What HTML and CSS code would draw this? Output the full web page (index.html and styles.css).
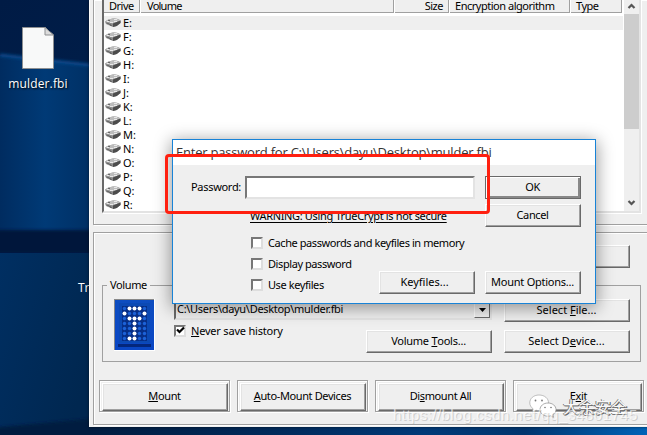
FILE: index.html
```html
<!DOCTYPE html>
<html lang="en">
<head>
<meta charset="utf-8">
<title>TrueCrypt</title>
<link rel="stylesheet" href="styles.css">
</head>
<body>
<svg width="0" height="0" class="defs" aria-hidden="true">
  <defs>
    <symbol id="drive" viewBox="0 0 16 10">
      <path d="M0 3.500Q3 1 8 .5T15.500 2.500V5Q13 8 8 9L1 6z" fill="#8a8a8a"/>
      <path d="M0 3.500Q3 1 8 .5T15.500 2.500L8 5.500z" fill="#bcbcbc"/>
      <path d="M8 5.500 15.500 2.500V5Q13 8 8 9z" fill="#4c4c4c"/>
      <path d="M2 3.500h2M5 4.500h3M9 1.500h3M9 3.500h3" stroke="#e8e8e8" stroke-width="1"/>
      <path d="M3 2.500h2M2 5.500h2M4 6.500h2M5 7.500h2" stroke="#6a6a6a" stroke-width="1"/>
    </symbol>
  </defs>
</svg>
<main class="desktop">
  <svg class="wallpaper" viewBox="0 0 647 435" aria-hidden="true">
    <defs>
      <linearGradient id="sky" x1="0" y1="0" x2="1" y2="1"><stop offset="0" stop-color="#001b45"/><stop offset="1" stop-color="#002a5b"/></linearGradient>
      <linearGradient id="beam" x1="0" y1="0" x2="1" y2="0"><stop offset="0" stop-color="#002c60"/><stop offset=".5" stop-color="#003a76"/><stop offset="1" stop-color="#003065"/></linearGradient>
      <linearGradient id="low" x1="0" y1="0" x2="1" y2=".6"><stop offset="0" stop-color="#002f62"/><stop offset="1" stop-color="#002750"/></linearGradient>
      <linearGradient id="floor" x1="0" y1="0" x2="1" y2="0"><stop offset="0" stop-color="#001c40"/><stop offset=".35" stop-color="#002b5c"/><stop offset=".6" stop-color="#003a78"/><stop offset=".78" stop-color="#00356e"/><stop offset="1" stop-color="#0063b8"/></linearGradient>
      <filter id="soft" x="-20%" y="-50%" width="140%" height="200%"><feGaussianBlur stdDeviation="1.5"/></filter>
    </defs>
    <path d="M0 0h647v435H0z" fill="url(#sky)"/>
    <path d="M0 55 90 65v170H0z" fill="url(#beam)"/>
    <path d="M0 55 90 65" stroke="#0a4a8c" stroke-width="3" filter="url(#soft)"/>
    <path d="M-10 230h110v23H-10z" fill="#00183a" filter="url(#soft)"/>
    <path d="M0 253h90v182H0z" fill="url(#low)"/>
    <path d="M-10 428 100 418v26H-10z" fill="#001c40" filter="url(#soft)"/>
    <path d="M90 426h557v9H90z" fill="url(#floor)"/>
  </svg>
  <figure class="shortcut">
    <svg width="34" height="44" viewBox="0 0 34 44"><path d="M1.500 1.500H24L32.500 9V42.500H1.500z" fill="#f8f9f9" stroke="#8d8f91"/><path d="M24 1.500V9h8.500z" fill="#dcdcdc" stroke="#8d8f91"/></svg>
    <figcaption>mulder.fbi</figcaption>
  </figure>
  <span class="behind">TrueCrypt</span>

  <section class="window">
    <div class="panel top">
      <div class="list">
        <div class="listmain">
          <div class="head"><span>Drive</span><span>Volume</span><span class="r">Size</span><span>Encryption algorithm</span><span>Type</span></div>
          <ul>
            <li class="sel"><svg><use href="#drive"/></svg>E:</li>
            <li><svg><use href="#drive"/></svg>F:</li>
            <li><svg><use href="#drive"/></svg>G:</li>
            <li><svg><use href="#drive"/></svg>H:</li>
            <li><svg><use href="#drive"/></svg>I:</li>
            <li><svg><use href="#drive"/></svg>J:</li>
            <li><svg><use href="#drive"/></svg>K:</li>
            <li><svg><use href="#drive"/></svg>L:</li>
            <li><svg><use href="#drive"/></svg>M:</li>
            <li><svg><use href="#drive"/></svg>N:</li>
            <li><svg><use href="#drive"/></svg>O:</li>
            <li><svg><use href="#drive"/></svg>P:</li>
            <li><svg><use href="#drive"/></svg>Q:</li>
            <li><svg><use href="#drive"/></svg>R:</li>
          </ul>
        </div>
        <div class="scroll">
          <svg width="15" height="14" viewBox="0 0 15 14"><path d="M4.500 8 7.500 5 10.500 8" fill="none" stroke="#555" stroke-width="2.200"/></svg>
          <i></i>
          <svg width="15" height="16" viewBox="0 0 15 16"><path d="M4.500 6 7.500 9 10.500 6" fill="none" stroke="#555" stroke-width="2.200"/></svg>
        </div>
      </div>
    </div>
    <div class="panel bottom">
      <button class="btn upper"></button>
      <fieldset>
        <legend>Volume</legend>
        <svg class="logo" width="41" height="52" viewBox="0 0 41 52">
          <defs>
            <linearGradient id="blue" x1="0" y1="0" x2="0" y2="1"><stop offset="0" stop-color="#0d4dc0"/><stop offset="1" stop-color="#0a46c4"/></linearGradient>
            <pattern id="dots" x="8" y="7" width="5" height="5" patternUnits="userSpaceOnUse"><rect width="5" height="5" fill="#062f88"/><circle cx="2.500" cy="2.500" r="1.700" fill="#1c62d8"/></pattern>
          </defs>
          <path d="M0 0h41v52H0z" fill="#fff"/><path d="M0 0h40v51H0z" fill="#888"/>
          <path d="M1 1h39v50H1z" fill="url(#blue)"/>
          <path d="M5 4h31v40H5z" fill="#0b49b4"/><path d="M4 45h33v3H4z" fill="#04277c"/>
          <path d="M8 7h25v35H8z" fill="url(#dots)"/>
          <g fill="#fff"><circle cx="15.500" cy="9.500" r="2"/><circle cx="20.500" cy="9.500" r="2"/><circle cx="25.500" cy="9.500" r="2"/><circle cx="10.500" cy="14.500" r="2"/><circle cx="30.500" cy="14.500" r="2"/><circle cx="15.500" cy="19.500" r="2"/><circle cx="20.500" cy="19.500" r="2"/><circle cx="25.500" cy="19.500" r="2"/><circle cx="20.500" cy="24.500" r="2"/><circle cx="20.500" cy="29.500" r="2"/><circle cx="20.500" cy="34.500" r="2"/><circle cx="15.500" cy="39.500" r="2"/><circle cx="20.500" cy="39.500" r="2"/></g>
        </svg>
        <div class="middle">
          <div class="combo"><span>C:\Users\dayu\Desktop\mulder.fbi</span><b><svg width="7" height="4" viewBox="0 0 7 4"><path d="M0 0h7L3.500 4z"/></svg></b></div>
          <div class="under">
            <label class="check"><i><svg width="9" height="9" viewBox="0 0 9 9"><path d="M1 3.500 3.500 6 8 1.500" fill="none" stroke="#000" stroke-width="2.200"/></svg></i><span><u>N</u>ever save history</span></label>
            <button class="btn more">Volume <u>T</u>ools...</button>
          </div>
        </div>
        <div class="side"><button class="btn wide">Select <u>F</u>ile...</button><button class="btn wide">Select D<u>e</u>vice...</button></div>
      </fieldset>
      <div class="actions">
        <div><button class="btn"><u>M</u>ount</button></div>
        <div><button class="btn"><u>A</u>uto-Mount Devices</button></div>
        <div><button class="btn">Di<u>s</u>mount All</button></div>
        <div><button class="btn">E<u>x</u>it</button></div>
      </div>
    </div>
  </section>

  <section class="dialog">
    <header>Enter password for C:\Users\dayu\Desktop\mulder.fbi</header>
    <div class="form">
      <div class="row one"><span class="pw">Password:</span><input type="text" aria-label="Password"><button class="btn ok">OK</button></div>
      <div class="row two"><span class="warn">WARNING: Using TrueCrypt is not secure</span><button class="btn">Cancel</button></div>
      <div class="row three">
        <div class="checks">
          <label class="check"><i></i><span>Cache passwords and keyfiles in memory</span></label>
          <label class="check"><i></i><span>Display password</span></label>
          <label class="check"><i></i><span>Use keyfiles</span></label>
        </div>
        <button class="btn key">Keyfiles...</button><button class="btn more">Mount Options...</button>
      </div>
    </div>
  </section>
  <div class="marker"></div>
  <div class="credit">
    <svg width="29" height="24" viewBox="0 0 29 24"><path d="M10 1C4.500 1 .8 4.500.8 8.800c0 2.500 1.300 4.600 3.300 6L3.500 18l3.500-1.800c1 .3 2 .4 3 .4 5.500 0 9.500-3.400 9.500-7.800S15.500 1 10 1z" fill="#fff" stroke="#999" stroke-width=".6"/><path d="M19 9c-4.500 0-8 2.900-8 6.600s3.500 6.600 8 6.600c.9 0 1.800-.1 2.600-.4l2.900 1.500-.6-2.600c1.900-1.200 3.100-3 3.100-5.100C27 11.900 23.500 9 19 9z" fill="#fff" stroke="#888" stroke-width=".7"/><g fill="#777"><circle cx="6.500" cy="6.500" r=".9"/><circle cx="13" cy="6.500" r=".9"/><circle cx="16" cy="13.500" r=".8"/><circle cx="22" cy="13.500" r=".8"/></g></svg>
    <span>大余安全</span>
  </div>
  <div class="url">https://blog.csdn.net/qq_34801745</div>
</main>
</body>
</html>
```
FILE: styles.css
```css
* { box-sizing: border-box; }
body { margin: 0; width: 647px; height: 435px; overflow: hidden; font: 11px/14px "Noto Sans", sans-serif; letter-spacing: -.38px; color: #000; }
.defs { position: absolute; }
.desktop { position: relative; width: 647px; height: 435px; overflow: hidden; }
.wallpaper { display: block; width: 647px; height: 435px; }
.shortcut { position: absolute; left: 0; top: 26px; width: 76px; margin: 0; display: flex; flex-direction: column; align-items: center; }
.shortcut figcaption { margin-top: 5px; font: 12px/18px "Open Sans", sans-serif; letter-spacing: .15px; color: #fff; text-shadow: 1px 1px 2px #000; }
.behind { position: absolute; left: 78px; top: 280px; color: #fff; font: 12px/16px "Open Sans", sans-serif; letter-spacing: 0; }
.window { position: absolute; left: 89px; top: 0; width: 566px; height: 427px; padding: 0 4px 2px; background: #efefef; border-left: 1px solid #fafafa; display: flex; flex-direction: column; box-shadow: 0 0 3px #0008; }
.panel { border: 1px solid #a0a0a0; box-shadow: inset 1px 1px #fff, 1px 1px #fff; margin-left: -1px; }
.top { height: 225px; border-top: 0; padding-left: 8px; }
.list { width: 539px; height: 213px; border: 2px solid; border-color: #a0a0a0 #e3e3e3 #e3e3e3 #696969; border-top: 0; background: #fff; display: flex; justify-content: space-between; box-shadow: 1px 1px #fff; }
.listmain { width: 519px; }
.head { display: grid; grid-template-columns: 37px 254px 55px 121px 52px; height: 13px; line-height: 12px; letter-spacing: -.48px; }
.head span { background: #efefef; border: solid #a0a0a0; border-width: 0 1px 1px 0; margin-right: 1px; padding-left: 5px; }
.head span:nth-child(2) { padding-left: 6px; letter-spacing: -.75px; }
.head .r { text-align: right; padding-right: 5px; }
ul { list-style: none; margin: 3px 0 0; padding: 0; }
li { height: 14px; padding-left: 1px; display: flex; align-items: center; letter-spacing: 0; }
li svg { width: 16px; height: 10px; margin-right: 2px; }
.sel { background: #efefef; }
.scroll { width: 15px; background: #efefef; display: flex; flex-direction: column; }
.scroll i { height: 115px; background: #cdcdcd; }
.scroll svg:last-child { margin-top: auto; }
.bottom { margin-top: 7px; height: 193px; padding: 12px 0 0 5px; }
.btn { display: flex; align-items: center; justify-content: center; font: inherit; letter-spacing: inherit; color: #000; border: 1px solid; border-color: #fff #696969 #696969 #fff; box-shadow: inset -1px -1px #a0a0a0, inset 1px 1px #e3e3e3; background: #efefef; width: 126px; height: 23px; padding: 0 1px 1px 0; border-radius: 0; white-space: pre; }
.btn u { text-underline-offset: 1px; }
.more { letter-spacing: -.25px; }
.wide { letter-spacing: 0; }
.upper { margin-left: 405px; margin-bottom: 10px; }
fieldset { width: 539px; height: 84px; border: 1px solid #a0a0a0; margin: 0 0 0 3px; padding: 7px 0 0 11px; display: flex; }
legend { padding: 0 3px; margin-left: -7px; height: 14px; }
.logo { flex: none; margin-right: 19px; }
.middle { width: 318px; margin-right: 12px; }
.combo { height: 20px; margin-top: 1px; border: 2px solid; border-color: #a0a0a0 #e3e3e3 #e3e3e3 #696969; display: flex; justify-content: space-between; padding-left: 1px; letter-spacing: -.3px; }
.combo b { width: 16px; display: flex; align-items: center; justify-content: center; border: 1px solid; border-color: #fff #696969 #696969 #fff; }
.under { display: flex; justify-content: space-between; align-items: flex-start; }
.check { display: flex; align-items: center; height: 21px; }
.check i { flex: none; width: 12px; height: 12px; background: #fff; border: 2px solid; border-color: #777 #ddd #ddd #777; margin-right: 5px; display: flex; align-items: center; justify-content: center; }
.check svg { flex: none; }
.under .check { letter-spacing: -.2px; }
.side { display: flex; flex-direction: column; gap: 8px; }
.under .btn { margin-top: 10px; }
.actions { display: flex; gap: 7px; margin-top: 18px; }
.actions > div { flex: none; width: 131px; height: 32px; border: 1px solid #a0a0a0; box-shadow: inset 1px 1px #fff, 1px 1px #fff; padding: 2px 1px 0 2px; }
.actions .btn { height: 28px; width: 126px; padding-bottom: 2px; }
.dialog { position: absolute; left: 172px; top: 139px; width: 424px; height: 165px; border: 1px solid #1883d7; background: #efefef; box-shadow: 0 3px 16px 1px #0006; }
.dialog header { height: 25px; background: #fff; padding-left: 3px; font: 13px/24px "Open Sans", sans-serif; letter-spacing: -.22px; color: #333; white-space: pre; }
.form { padding: 11px 14px 0 18px; }
.row { display: flex; }
.row .btn { width: 96px; }
.pw { width: 54px; line-height: 22px; letter-spacing: -.3px; }
input { width: 230px; height: 23px; border: 2px solid; border-color: #777 #e3e3e3 #e3e3e3 #777; background: #fff; padding: 0; margin-right: 10px; outline: 0; }
.ok { outline: 1px solid #696969; outline-offset: -1px; box-shadow: inset 1px 1px #fff, inset -2px -2px #888; }
.two { margin-top: 5px; justify-content: space-between; padding-left: 59px; }
.warn { text-decoration: underline; text-underline-offset: 2px; line-height: 24px; letter-spacing: -.34px; }
.three { margin-top: 4px; padding-left: 60px; align-items: flex-end; justify-content: flex-end; }
.three .check { letter-spacing: -.42px; }
.three .check span { white-space: pre; }
.three .btn { margin-bottom: 1px; }
.checks { flex: 1; width: 0; }
.three .key { margin-right: 10px; letter-spacing: 0; padding-right: 5px; }
.marker { position: absolute; left: 165px; top: 154px; width: 325px; height: 60px; border: 3px solid #ff2010; border-radius: 4px; }
.credit { position: absolute; left: 529px; top: 394px; display: flex; align-items: center; gap: 5px; font: 16px/24px "Noto Sans CJK SC", sans-serif; letter-spacing: 0; color: #f8f8f8; text-shadow: -1px 0 #777, 0 1px #777, 1px 1px #555; }
.url { position: absolute; left: 393px; top: 406px; font: 15px/18px "Liberation Sans", sans-serif; letter-spacing: .44px; color: #fffa; text-shadow: 1px 1px #9996; }
```
